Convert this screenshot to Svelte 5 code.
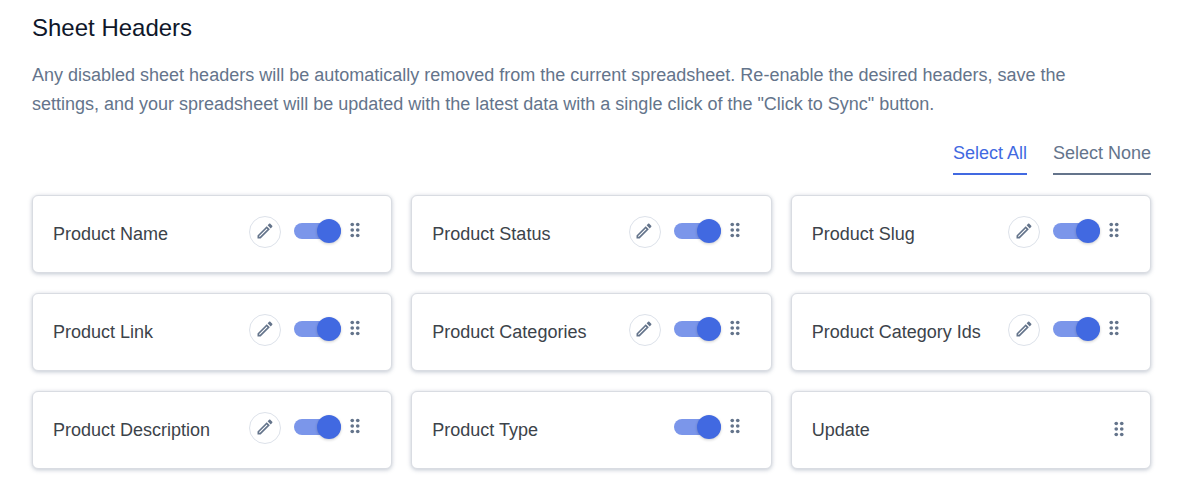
<script>
  let headers = $state([
    { name: "Product Name", enabled: true, editable: true },
    { name: "Product Status", enabled: true, editable: true },
    { name: "Product Slug", enabled: true, editable: true },
    { name: "Product Link", enabled: true, editable: true },
    { name: "Product Categories", enabled: true, editable: true },
    { name: "Product Category Ids", enabled: true, editable: true },
    { name: "Product Description", enabled: true, editable: true },
    { name: "Product Type", enabled: true, editable: false },
    { name: "Update", locked: true },
  ]);

  function setAll(value) {
    headers.forEach((header) => {
      if (!header.locked) header.enabled = value;
    });
  }
</script>

<section>
  <h2>Sheet Headers</h2>
  <p>
    Any disabled sheet headers will be automatically removed from the current
    spreadsheet. Re-enable the desired headers, save the settings, and your
    spreadsheet will be updated with the latest data with a single click of the
    "Click to Sync" button.
  </p>

  <div class="actions">
    <button class="select all" onclick={() => setAll(true)}>Select All</button>
    <button class="select" onclick={() => setAll(false)}>Select None</button>
  </div>

  <ul>
    {#each headers as header, i}
      <li>
        {#if header.locked}
          <span class="name">{header.name}</span>
        {:else}
          <label class="name" for="header-{i}">{header.name}</label>
        {/if}
        <div class="controls" class:locked={header.locked}>
          {#if header.editable}
            <button class="edit" aria-label="Edit {header.name}">
              <svg viewBox="0 0 24 24" width="20" height="20" aria-hidden="true">
                <path
                  d="M3 17.25V21h3.75L17.81 9.94l-3.75-3.75L3 17.25zM5.92 19H5v-.92l9.06-9.06.92.92L5.92 19zM20.71 5.63l-2.34-2.34c-.2-.2-.45-.29-.71-.29s-.51.1-.7.29l-1.83 1.83 3.75 3.75 1.83-1.83c.39-.39.39-1.02 0-1.41z"
                />
              </svg>
            </button>
          {/if}
          {#if !header.locked}
            <input
              id="header-{i}"
              type="checkbox"
              role="switch"
              bind:checked={header.enabled}
            />
          {/if}
          <svg class="drag" viewBox="0 0 24 24" width="22" height="22" aria-hidden="true">
            {#each [6, 12, 18] as cy}
              <circle cx="9" {cy} r="2" />
              <circle cx="15" {cy} r="2" />
            {/each}
          </svg>
        </div>
      </li>
    {/each}
  </ul>
</section>

<style>
  :global(body) {
    background-color: #fff;
  }
  section {
    padding: 12px 31px 28px 32px;
    font-family: "Liberation Sans", Arial, sans-serif;
    font-size: 18px;
    color: #64748b;
  }
  h2 {
    margin: 0 0 17px;
    font-size: 24px;
    font-weight: 400;
    line-height: 32px;
    color: #0f172a;
  }
  p {
    margin: 0;
    padding-right: 20px;
    line-height: 29px;
  }
  .actions {
    display: flex;
    justify-content: flex-end;
    gap: 26px;
    margin: 20px 0;
  }
  button {
    padding: 0;
    border: none;
    background: none;
    font: inherit;
    color: inherit;
    cursor: pointer;
  }
  .select {
    padding-bottom: 6px;
    border-bottom: 2px solid #64748b;
    line-height: 28px;
  }
  .all {
    color: #4169e1;
    border-color: #4169e1;
  }
  ul {
    display: grid;
    grid-template-columns: repeat(3, 1fr);
    gap: 20px 19px;
    margin: 0;
    padding: 0;
    list-style: none;
  }
  li {
    box-sizing: border-box;
    display: flex;
    align-items: center;
    justify-content: space-between;
    min-height: 78px;
    padding: 0 20px;
    border: 1px solid #d9dce2;
    border-radius: 6px;
    background-color: #fff;
    box-shadow: 0 1px 4px rgba(100, 116, 139, 0.4);
  }
  .name {
    color: #3c434a;
  }
  .controls {
    display: flex;
    align-items: center;
    padding: 0 5px 6px 0;
  }
  .locked {
    padding: 0;
  }
  .edit {
    display: flex;
    align-items: center;
    justify-content: center;
    box-sizing: border-box;
    width: 32px;
    height: 32px;
    margin: 2px 13px 0 0;
    padding: 0 1px 3px 0;
    border: 1px solid #dde2ea;
    border-radius: 50%;
  }
  svg {
    display: block;
    fill: #64748b;
  }
  .drag {
    margin-bottom: 3px;
  }
  input {
    appearance: none;
    display: flex;
    align-items: center;
    width: 47px;
    height: 16px;
    margin: 0 3px 0 0;
    border-radius: 8px;
    background-color: #cbd5e1;
    cursor: pointer;
  }
  input::before {
    content: "";
    flex: none;
    width: 24px;
    height: 24px;
    border-radius: 50%;
    background-color: #f1f5f9;
    box-shadow: 0 1px 3px rgba(0, 0, 0, 0.2);
  }
  input:checked {
    justify-content: flex-end;
    background-color: #7b96ea;
  }
  input:checked::before {
    background-color: #4169e1;
  }
</style>
